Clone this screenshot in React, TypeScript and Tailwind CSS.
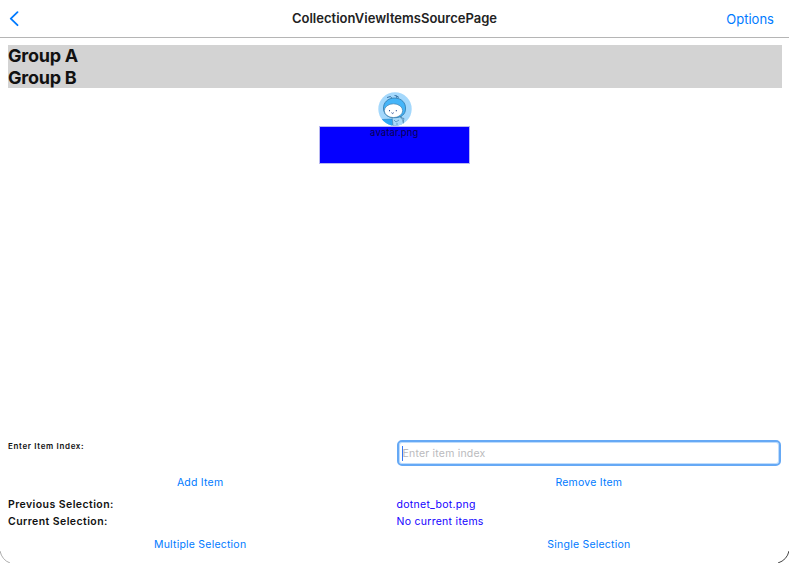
import type { ReactNode } from "react";

function Avatar() {
  return (
    <svg className="block h-[34px] w-[34px]" viewBox="0 0 34 34">
      <defs>
        <clipPath id="disc">
          <circle cx="17" cy="17" r="16.7" />
        </clipPath>
      </defs>
      <g clipPath="url(#disc)">
        <rect width="34" height="34" fill="#a4d8fc" />
        <path d="M14 6.5 12.500 4.500 9 5.500M19 6.500 18.500 3.800 16.500 3.500M18.500 3.800 21 5.500" fill="none" stroke="#3a76a8" strokeWidth="1" />
        <path d="M4 27.500 14 27 17 31 13 34H8Z" fill="#2fa8f2" stroke="#2679b5" strokeWidth=".5" />
        <path d="M14 24h9l3 8-4 2h-7Z" fill="#a9daf9" stroke="#467da5" strokeWidth=".6" />
        <path d="M22 25.500l4 1-1 4" fill="none" stroke="#467da5" strokeWidth=".7" />
        <path d="M5.500 17C5 10.500 10 6 16.500 6c7 0 11.500 5 11 11 0 5-4 8.700-10.500 8.700C10 25.700 6 22.500 5.500 17Z" fill="#45b5f9" stroke="#2f76a8" strokeWidth=".8" />
        <ellipse cx="15.500" cy="18.700" rx="9.200" ry="6.900" fill="#fff" stroke="#3f7fae" strokeWidth=".7" />
        <path d="M11.500 18v1.300M18.300 18v1.300M13.500 20.700l1.200.8 1-.8" fill="none" stroke="#33589a" strokeWidth="1" />
        <path d="M16 28l2 2 3-2M19 31v2" fill="none" stroke="#4686b4" strokeWidth=".7" />
      </g>
    </svg>
  );
}

function Action({ children }: { children: ReactNode }) {
  return (
    <button className="flex-1 text-center text-[10.5px] leading-[14px] tracking-[0.22px] text-[#007aff]">
      {children}
    </button>
  );
}

function Selection({ label, value }: { label: string; value: string }) {
  return (
    <div className="flex h-[17px] leading-[17px]">
      <div className="w-[388.5px] text-[10.5px] font-semibold tracking-[0.43px]">{label}</div>
      <div className="text-[10.5px] tracking-[0.28px] text-[#1400ff]">{value}</div>
    </div>
  );
}

export default function App() {
  return (
    <div className="relative flex h-[563px] w-[789px] flex-col overflow-hidden bg-white font-['Inter',sans-serif] text-[#111]">
      <header className="grid h-[38px] shrink-0 grid-cols-[1fr_auto_1fr] items-center border-b border-[#b5b5b5]">
        <button aria-label="Back" className="pl-[9px]">
          <svg className="block h-4 w-3" viewBox="0 0 12 16">
            <path d="M8.500 1.200 1.800 7.700l6.700 6.500" fill="none" stroke="#007aff" strokeWidth="1.800" strokeLinecap="round" strokeLinejoin="round" />
          </svg>
        </button>
        <h1 className="text-[13px] font-semibold tracking-[0.01px] text-[#222]">CollectionViewItemsSourcePage</h1>
        <button className="pt-0.5 pr-[15px] text-right text-[13px] tracking-[0.01px] text-[#007aff]">Options</button>
      </header>

      <main className="flex flex-1 flex-col pr-[7.5px] pl-2 pt-[7px]">
        <section className="h-[43px] bg-[#d3d3d3] text-[18px] leading-[21.5px] font-bold tracking-[-0.25px]">
          <h2>Group A</h2>
          <h2>Group B</h2>
        </section>

        <section className="flex flex-col items-center pt-[4px]">
          <Avatar />
          <div className="mr-px h-[38px] w-[151px] border border-[#b8b8f2] bg-[#0500ff] text-center text-[9.5px] leading-[11px] tracking-[0.1px] text-[#080050]">
            avatar.png
          </div>
        </section>

        <section className="mt-auto pr-[0.5px] pb-[11px]">
          <div className="flex h-[26px]">
            <label className="w-[388.5px] text-[8px] leading-[12px] font-semibold tracking-[0.65px]">Enter Item Index:</label>
            <div className="flex flex-1 items-center rounded-[5px] border-2 border-[#66a9f5] pl-[3px] shadow-[inset_0_0_0_1px_#bedcfc]">
              <span className="h-[15px] w-px bg-[#3478f6]" />
              <span className="pt-0.5 text-[10.5px] tracking-[0.2px] text-[#bababd]">Enter item index</span>
            </div>
          </div>
          <div className="mt-[10px] flex gap-[4.5px]">
            <Action>Add Item</Action>
            <Action>Remove Item</Action>
          </div>
          <div className="mt-[6px]">
            <Selection label="Previous Selection:" value="dotnet_bot.png" />
            <Selection label="Current Selection:" value="No current items" />
          </div>
          <div className="mt-[8px] flex gap-[4.5px]">
            <Action>Multiple Selection</Action>
            <Action>Single Selection</Action>
          </div>
        </section>
      </main>

      <svg className="absolute bottom-0 left-0 h-3 w-[789px]" viewBox="0 0 789 12">
        <path d="M0 0Q2 9 10 12" fill="none" stroke="#999" strokeWidth=".8" />
        <path d="M789 0Q787 9 778 12" fill="none" stroke="#444" strokeWidth="1" />
      </svg>
    </div>
  );
}
